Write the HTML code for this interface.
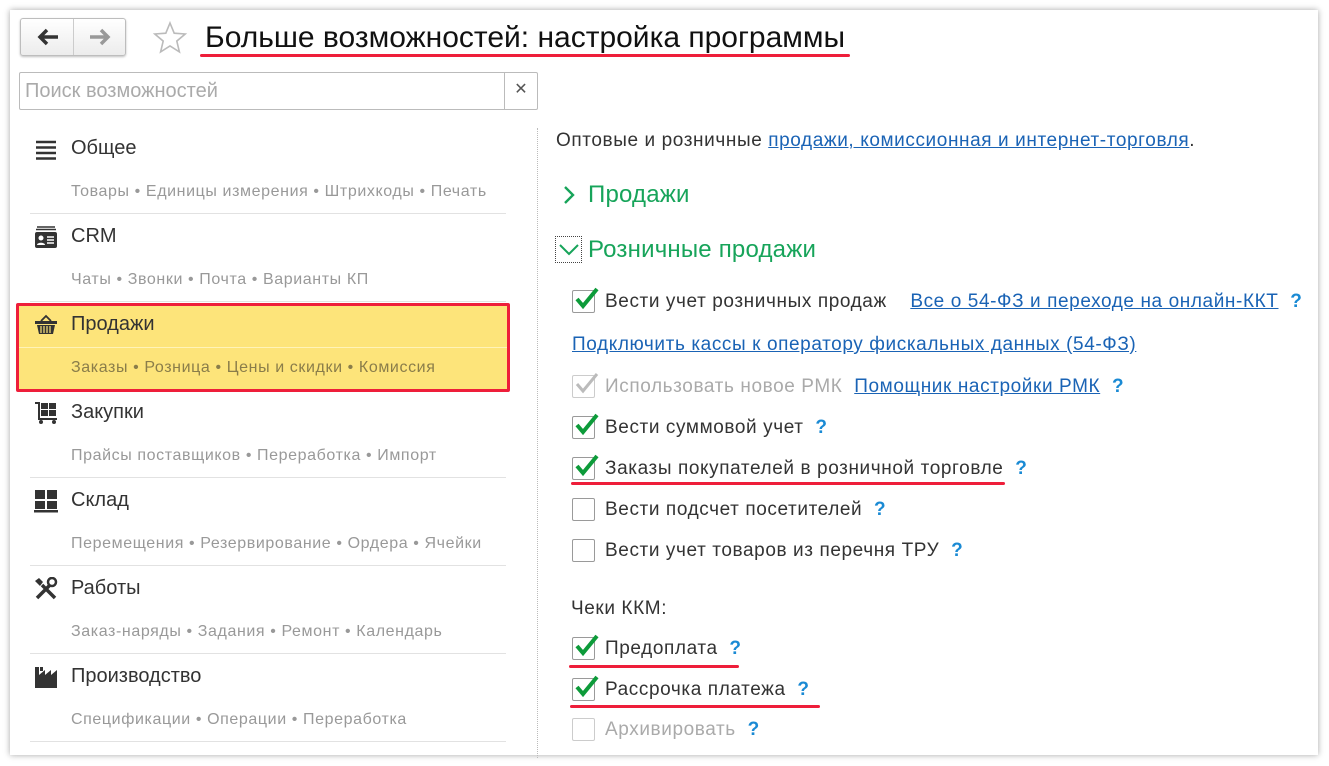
<!DOCTYPE html>
<html><head><meta charset="utf-8"><style>
*{margin:0;padding:0;box-sizing:border-box}
body{width:1329px;height:766px;background:#fff;font-family:"Liberation Sans",Arial,sans-serif;position:relative;overflow:hidden;color:#333}
.card{position:absolute;left:10px;top:10px;width:1308px;height:745px;background:#fff;box-shadow:0 0 6px rgba(0,0,0,.35)}
.a{position:absolute;white-space:nowrap}
.nav{left:20px;top:18px;width:106px;height:38px;border:1px solid #bdbdbd;border-radius:3px;background:linear-gradient(#fff,#ececec);box-shadow:0 1px 2px rgba(0,0,0,.25)}
.nav .sep{position:absolute;left:52px;top:0;width:1px;height:36px;background:#ccc}
.title{left:205px;top:21px;font-size:30px;color:#111}
.red{position:absolute;background:#ee1e3a;height:3px;border-radius:2px}
.search{left:19px;top:72px;width:519px;height:38px;border:1px solid #bbb;border-radius:2px}
.search .ph{position:absolute;left:5px;top:7px;font-size:20px;color:#aaa}
.search .x{position:absolute;right:0;top:0;width:33px;height:36px;border-left:1px solid #bbb;text-align:center;line-height:34px;font-size:16px;color:#555}
.h{font-size:20px;color:#333}
.s{font-size:16px;color:#999;letter-spacing:.6px}
.line{position:absolute;left:30px;width:476px;height:1px;background:#e2e2e2}
.ic{position:absolute;left:34px;width:24px;height:24px}
.vd{position:absolute;left:537px;top:128px;height:630px;border-left:1px dotted #bbb}
.t{font-size:19px;color:#333;letter-spacing:.6px}
.lk{color:#1a63b5;text-decoration:underline}
.q{color:#1a8ad4;font-weight:bold}
.g{font-size:24px;color:#17a45a;letter-spacing:.2px}
.cb{position:absolute;left:572px;width:23px;height:23px;border:1px solid #9a9a9a;border-radius:2px;background:#fff}
.cb svg{position:absolute;left:1px;top:-5px}
.dis{border-color:#ccc}
</style></head><body>
<div class="card"></div>
<div class="a nav"><div class="sep"></div>
<svg style="position:absolute;left:15px;top:9px" width="24" height="18"><path d="M22 9H5M11 2L4 9l7 7" stroke="#333" stroke-width="3.5" fill="none"/></svg>
<svg style="position:absolute;left:67px;top:9px" width="24" height="18"><path d="M2 9h17M13 2l7 7-7 7" stroke="#999" stroke-width="3.5" fill="none"/></svg>
</div>
<svg class="a" style="left:152px;top:20px" width="36" height="36"><path d="M18 3l4.2 10.2 11 .8-8.4 7.1 2.6 10.8L18 26l-9.4 5.9 2.6-10.8L2.8 14l11-.8z" fill="none" stroke="#bbb" stroke-width="1.6"/></svg>
<div class="a title">Больше возможностей: настройка программы</div>
<div class="red" style="left:200px;top:54px;width:650px"></div>
<div class="a search"><div class="ph">Поиск возможностей</div><div class="x">✕</div></div>

<svg class="ic" style="top:138px" viewBox="0 0 24 24"><path d="M2 4h20M2 9.5h20M2 15h20M2 20.5h20" stroke="#333" stroke-width="2.6"/></svg>
<div class="a h" style="left:71px;top:137px">Общее</div>
<div class="a s" style="left:71px;top:183px">Товары • Единицы измерения • Штрихкоды • Печать</div>
<div class="line" style="top:213px"></div>
<svg class="ic" style="top:225px" viewBox="0 0 24 24"><rect x="1" y="7" width="22" height="16" rx="2" fill="#333"/><path d="M3 2h18M2 4.5h20" stroke="#333" stroke-width="1.6"/><circle cx="7" cy="13" r="2.5" fill="#fff"/><path d="M3 20c0-3 8-3 8 0z" fill="#fff"/><path d="M13 12h7M13 15h7M13 18h7" stroke="#fff" stroke-width="1.5"/></svg>
<div class="a h" style="left:71px;top:225px">CRM</div>
<div class="a s" style="left:71px;top:271px">Чаты • Звонки • Почта • Варианты КП</div>
<div class="line" style="top:301px"></div>

<div class="a" style="left:16px;top:303px;width:494px;height:89px;background:#fde47a;border:3px solid #ee1e3a;border-radius:2px"></div>
<div class="a" style="left:19px;top:347px;width:488px;height:1px;background:#fff3b8"></div>
<svg class="ic" style="top:313px" viewBox="0 0 24 24"><path d="M7 8l5-5 5 5" stroke="#333" stroke-width="1.8" fill="none"/><rect x="1" y="8" width="22" height="3" fill="#333"/><path d="M3 12h18l-2 9H5z" fill="#333"/><path d="M7 13v7M10 13v7M13 13v7M16 13v7" stroke="#fde47a" stroke-width="1.2"/></svg>
<div class="a h" style="left:71px;top:313px">Продажи</div>
<div class="a s" style="left:71px;top:359px;color:#8a7d4a">Заказы • Розница • Цены и скидки • Комиссия</div>

<svg class="ic" style="top:401px" viewBox="0 0 24 24"><path d="M1 2h4v16h18" stroke="#333" stroke-width="2" fill="none"/><rect x="7" y="2" width="7" height="6" fill="#333"/><rect x="15" y="2" width="7" height="6" fill="#333"/><rect x="7" y="9" width="7" height="6" fill="#333"/><rect x="15" y="9" width="7" height="6" fill="#333"/><circle cx="7" cy="21" r="2" fill="#333"/><circle cx="20" cy="21" r="2" fill="#333"/></svg>
<div class="a h" style="left:71px;top:401px">Закупки</div>
<div class="a s" style="left:71px;top:447px">Прайсы поставщиков • Переработка • Импорт</div>
<div class="line" style="top:477px"></div>
<svg class="ic" style="top:489px" viewBox="0 0 24 24"><rect x="1" y="1" width="10" height="9" fill="#333"/><rect x="13" y="1" width="10" height="9" fill="#333"/><rect x="1" y="12" width="10" height="8" fill="#333"/><rect x="13" y="12" width="10" height="8" fill="#333"/><rect x="0" y="21" width="24" height="2.5" fill="#333"/></svg>
<div class="a h" style="left:71px;top:489px">Склад</div>
<div class="a s" style="left:71px;top:535px">Перемещения • Резервирование • Ордера • Ячейки</div>
<div class="line" style="top:565px"></div>
<svg class="ic" style="top:577px" viewBox="0 0 24 24"><path d="M3 21L16 8M8 8l13 13" stroke="#333" stroke-width="3.5"/><circle cx="18" cy="5" r="4" fill="none" stroke="#333" stroke-width="2.5"/><path d="M1 4l4-3 4 4-3 4z" fill="#333"/></svg>
<div class="a h" style="left:71px;top:577px">Работы</div>
<div class="a s" style="left:71px;top:623px">Заказ-наряды • Задания • Ремонт • Календарь</div>
<div class="line" style="top:653px"></div>
<svg class="ic" style="top:665px" viewBox="0 0 24 24"><path d="M1 23V2h4v8l6-5v5l6-5v5l6-5v18z" fill="#333"/><rect x="6" y="2" width="3" height="4" fill="#333"/></svg>
<div class="a h" style="left:71px;top:665px">Производство</div>
<div class="a s" style="left:71px;top:711px">Спецификации • Операции • Переработка</div>
<div class="line" style="top:741px"></div>

<div class="vd"></div>
<div class="a t" style="left:556px;top:130px">Оптовые и розничные <span class="lk">продажи, комиссионная и интернет-торговля</span>.</div>
<svg class="a" style="left:562px;top:185px" width="14" height="20"><path d="M3 2l8 8-8 8" stroke="#17a45a" stroke-width="2.4" fill="none"/></svg>
<div class="a g" style="left:588px;top:181px">Продажи</div>
<div class="a" style="left:555px;top:236px;width:27px;height:27px;border:1px dotted #444"></div>
<svg class="a" style="left:558px;top:243px" width="22" height="14"><path d="M2 2l9 9 9-9" stroke="#17a45a" stroke-width="2" fill="none"/></svg>
<div class="a g" style="left:588px;top:236px">Розничные продажи</div>

<div class="cb" style="top:290px"><svg width="26" height="26"><path d="M3 13l6 7L23 3" stroke="#0d9b3a" stroke-width="4" fill="none"/></svg></div>
<div class="a t" style="left:605px;top:291px">Вести учет розничных продаж&nbsp;&nbsp;&nbsp; <span class="lk">Все о 54-ФЗ и переходе на онлайн-ККТ</span>&nbsp; <span class="q">?</span></div>
<div class="a t lk" style="left:572px;top:334px">Подключить кассы к оператору фискальных данных (54-ФЗ)</div>
<div class="cb dis" style="top:375px"><svg width="26" height="26"><path d="M3 13l6 7L23 3" stroke="#bbb" stroke-width="3" fill="none"/></svg></div>
<div class="a t" style="left:605px;top:376px"><span style="color:#aaa">Использовать новое РМК</span>&nbsp; <span class="lk">Помощник настройки РМК</span>&nbsp; <span class="q">?</span></div>
<div class="cb" style="top:416px"><svg width="26" height="26"><path d="M3 13l6 7L23 3" stroke="#0d9b3a" stroke-width="4" fill="none"/></svg></div>
<div class="a t" style="left:605px;top:417px">Вести суммовой учет&nbsp; <span class="q">?</span></div>
<div class="cb" style="top:457px"><svg width="26" height="26"><path d="M3 13l6 7L23 3" stroke="#0d9b3a" stroke-width="4" fill="none"/></svg></div>
<div class="a t" style="left:605px;top:458px">Заказы покупателей в розничной торговле&nbsp; <span class="q">?</span></div>
<div class="red" style="left:571px;top:482px;width:434px"></div>
<div class="cb" style="top:498px"></div>
<div class="a t" style="left:605px;top:499px">Вести подсчет посетителей&nbsp; <span class="q">?</span></div>
<div class="cb" style="top:539px"></div>
<div class="a t" style="left:605px;top:540px">Вести учет товаров из перечня ТРУ&nbsp; <span class="q">?</span></div>
<div class="a t" style="left:571px;top:598px">Чеки ККМ:</div>
<div class="cb" style="top:637px"><svg width="26" height="26"><path d="M3 13l6 7L23 3" stroke="#0d9b3a" stroke-width="4" fill="none"/></svg></div>
<div class="a t" style="left:605px;top:638px">Предоплата&nbsp; <span class="q">?</span></div>
<div class="red" style="left:569px;top:665px;width:170px"></div>
<div class="cb" style="top:678px"><svg width="26" height="26"><path d="M3 13l6 7L23 3" stroke="#0d9b3a" stroke-width="4" fill="none"/></svg></div>
<div class="a t" style="left:605px;top:679px">Рассрочка платежа&nbsp; <span class="q">?</span></div>
<div class="red" style="left:570px;top:705px;width:250px"></div>
<div class="cb dis" style="top:718px"></div>
<div class="a t" style="left:605px;top:719px"><span style="color:#aaa">Архивировать</span>&nbsp; <span class="q">?</span></div>
</body></html>
